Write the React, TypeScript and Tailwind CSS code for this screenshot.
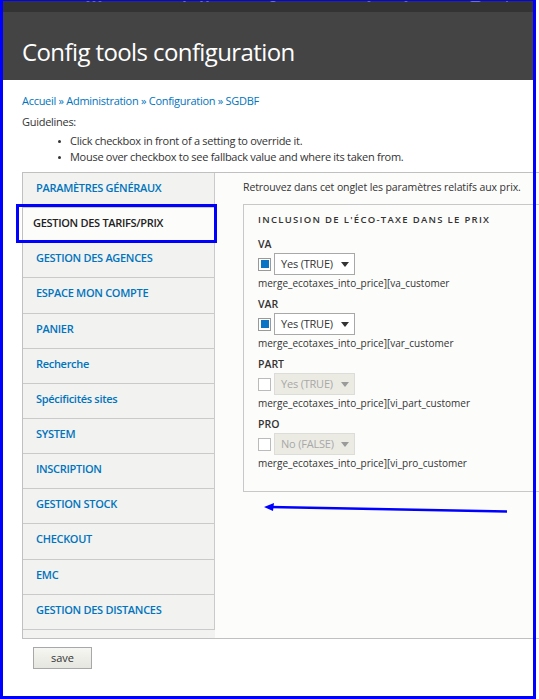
import React from "react";

const tabs = [
  "PARAMÈTRES GÉNÉRAUX",
  "GESTION DES TARIFS/PRIX",
  "GESTION DES AGENCES",
  "ESPACE MON COMPTE",
  "PANIER",
  "Recherche",
  "Spécificités sites",
  "SYSTEM",
  "INSCRIPTION",
  "GESTION STOCK",
  "CHECKOUT",
  "EMC",
  "GESTION DES DISTANCES",
];

function Checkbox({ checked }: { checked: boolean }) {
  return (
    <div
      className={
        "w-[13px] h-[13px] border flex items-center justify-center bg-white " +
        (checked ? "border-[#999]" : "border-[#bbb]")
      }
    >
      {checked && <div className="w-[8px] h-[8px] bg-[#0a74c4]" />}
    </div>
  );
}

function Select({ label, disabled }: { label: string; disabled?: boolean }) {
  return (
    <div
      className={
        "ml-[3px] w-[81px] h-[22px] border flex items-center pl-[6px] pr-[5px] justify-between text-[11px] tracking-[-0.2px] " +
        (disabled
          ? "bg-[#ebebe4] border-[#dcdcd8] text-[#a8a8a8]"
          : "bg-white border-[#a8a8a8] text-[#333]")
      }
    >
      <span>{label}</span>
      <svg width="8" height="5" viewBox="0 0 8 5">
        <path d="M0 0 L8 0 L4 5 Z" fill={disabled ? "#9a9a9a" : "#333"} />
      </svg>
    </div>
  );
}

function Field({
  title,
  checked,
  value,
  disabled,
  desc,
  first,
}: {
  title: string;
  checked: boolean;
  value: string;
  disabled?: boolean;
  desc: string;
  first?: boolean;
}) {
  return (
    <div className={first ? "mt-[8px]" : "mt-[5px]"}>
      <div className="text-[10.5px] leading-[16px] font-semibold text-[#333]">{title}</div>
      <div className="mt-[1px] flex items-center h-[22px]">
        <Checkbox checked={checked} />
        <Select label={value} disabled={disabled} />
      </div>
      <div className="text-[10px] leading-[16px] text-[#333]">{desc}</div>
    </div>
  );
}

export default function App() {
  const topBits = [
    { l: 86, w: 4 },
    { l: 92, w: 4 },
    { l: 98, w: 4 },
    { l: 183, w: 3 },
    { l: 200, w: 3 },
    { l: 206, w: 3 },
    { l: 270, w: 6 },
    { l: 367, w: 4 },
    { l: 404, w: 4 },
    { l: 470, w: 11 },
    { l: 506, w: 2 },
  ];
  return (
    <div className="relative w-[539px] h-[699px] overflow-hidden bg-white font-['Open_Sans',sans-serif] text-[#333]">
      {/* top toolbar */}
      <div className="relative w-[536px] h-[12px] bg-[#333]">
        {topBits.map((b, i) => (
          <div
            key={i}
            className="absolute top-0 h-[2px] bg-[#7a7a7a] rounded-b-[2px]"
            style={{ left: b.l, width: b.w }}
          />
        ))}
      </div>
      {/* header */}
      <div className="w-[536px] h-[68px] bg-[#444] pl-[22px] pt-[24px]">
        <h1 className="text-[24px] leading-[32px] text-white font-normal tracking-[-0.6px]">
          Config tools configuration
        </h1>
      </div>

      <div className="pl-[22px] pt-[13px]">
        <div className="text-[11px] leading-[16px] tracking-[-0.28px] text-[#0074bd]">
          Accueil » Administration » Configuration » SGDBF
        </div>
        <div className="mt-[5px] text-[11px] leading-[16px] tracking-[-0.28px]">Guidelines:</div>
        <ul className="mt-[3px] pl-[36px] text-[11px] leading-[16px] tracking-[-0.28px]">
          <li className="flex items-center">
            <span className="w-[3px] h-[3px] rounded-full bg-[#333] mr-[9px]" />
            Click checkbox in front of a setting to override it.
          </li>
          <li className="flex items-center">
            <span className="w-[3px] h-[3px] rounded-full bg-[#333] mr-[9px]" />
            Mouse over checkbox to see fallback value and where its taken from.
          </li>
        </ul>

        {/* vertical tabs */}
        <div className="mt-[7px] w-[560px] h-[467px] border border-[#c0c0c0] bg-[#fcfcfa] flex">
          <div className="w-[192px] shrink-0 bg-[#f2f2f0]">
            <div className="border-r border-[#cacaca]">
              {tabs.map((t, i) => {
                const active = i === 1;
                return (
                  <div
                    key={t}
                    className={
                      "h-[35.15px] border-b border-[#cacaca] pt-[8px] text-[11px] leading-[13px] font-semibold tracking-[-0.3px] " +
                      (active
                        ? "bg-[#fcfcfa] pl-[10px] text-[#222] -mr-[2px]"
                        : "pl-[13px] text-[#0074bd]")
                    }
                  >
                    {t}
                  </div>
                );
              })}
            </div>
          </div>
          <div className="flex-1 min-w-0 pl-[28px] pt-[6px]">
            <div className="text-[10.5px] leading-[16px] tracking-[-0.1px] whitespace-nowrap">
              Retrouvez dans cet onglet les paramètres relatifs aux prix.
            </div>
            <div className="mt-[9px] w-[330px] border border-[#c8c8c8] pl-[14px] pt-[7px] pb-[20px]">
              <div className="text-[9.5px] leading-[16px] font-semibold tracking-[1.3px] text-[#333] whitespace-nowrap">
                INCLUSION DE L'ÉCO-TAXE DANS LE PRIX
              </div>
              <Field
                first
                title="VA"
                checked
                value="Yes (TRUE)"
                desc="merge_ecotaxes_into_price][va_customer"
              />
              <Field
                title="VAR"
                checked
                value="Yes (TRUE)"
                desc="merge_ecotaxes_into_price][var_customer"
              />
              <Field
                title="PART"
                checked={false}
                disabled
                value="Yes (TRUE)"
                desc="merge_ecotaxes_into_price][vi_part_customer"
              />
              <Field
                title="PRO"
                checked={false}
                disabled
                value="No (FALSE)"
                desc="merge_ecotaxes_into_price][vi_pro_customer"
              />
            </div>
          </div>
        </div>

        <button className="mt-[8px] ml-[11px] w-[59px] h-[22px] border border-[#a8a8a8] bg-gradient-to-b from-[#f6f6f2] to-[#e6e6e0] text-[11px] text-[#333]">
          save
        </button>
      </div>

      {/* annotations */}
      <div className="absolute left-[16px] top-[204px] w-[201px] h-[39px] border-[3px] border-[#0000ff] pointer-events-none" />
      <svg
        className="absolute left-[260px] top-[500px] pointer-events-none"
        width="252"
        height="16"
        viewBox="0 0 252 16"
      >
        <path d="M247 11.5 L10 7" stroke="#0000ff" strokeWidth="2.5" fill="none" />
        <path d="M4 7 L14 3 L13 11 Z" fill="#0000ff" />
      </svg>
      <div className="absolute left-0 top-0 right-[3px] bottom-0 border-l-[3px] border-t-[1px] border-r-[3px] border-b-[3px] border-[#0000ff] pointer-events-none" />
    </div>
  );
}
